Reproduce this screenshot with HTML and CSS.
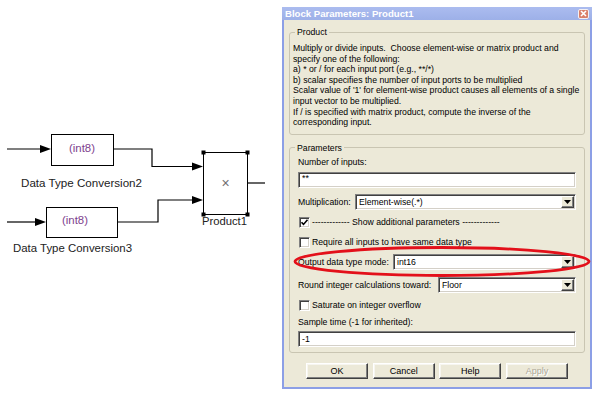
FILE: index.html
```html
<!DOCTYPE html>
<html>
<head>
<meta charset="utf-8">
<title>Block Parameters: Product1</title>
<link rel="stylesheet" href="styles.css">
</head>
<body>
<div class="page">
  <svg class="diagram" width="282" height="401" viewBox="0 0 282 401">
    <g fill="none" stroke="#000" stroke-width="1.2">
      <polyline points="7,149 42,149"/>
      <polyline points="113.5,149 152,149 152,166.5 193,166.5"/>
      <polyline points="7,222 37,222"/>
      <polyline points="117.5,222 158,222 158,200 193,200"/>
      <polyline points="248,183 265,183"/>
    </g>
    <g fill="#000">
      <polygon points="40,145 51,149 40,153"/>
      <polygon points="192,162.5 203,166.5 192,170.5"/>
      <polygon points="35,218 46,222 35,226"/>
      <polygon points="192,196 203,200 192,204"/>
    </g>
    <rect x="51.5" y="134.5" width="62" height="31" fill="#fff" stroke="#000"/>
    <rect x="46.5" y="207.5" width="71" height="30" fill="#fff" stroke="#000"/>
    <rect x="203.5" y="152.5" width="44" height="62" fill="#fff" stroke="#000"/>
    <g fill="#000">
      <rect x="201.5" y="150.5" width="4" height="4"/>
      <rect x="245.5" y="150.5" width="4" height="4"/>
      <rect x="201.5" y="212.5" width="4" height="4"/>
      <rect x="245.5" y="212.5" width="4" height="4"/>
    </g>
    <text class="dtype" x="69" y="151.5" textLength="26" lengthAdjust="spacingAndGlyphs">(int8)</text>
    <text class="dtype" x="62" y="224" textLength="26" lengthAdjust="spacingAndGlyphs">(int8)</text>
    <text class="times" x="225.5" y="188" text-anchor="middle">×</text>
    <text class="blabel" x="21" y="187" textLength="121" lengthAdjust="spacingAndGlyphs">Data Type Conversion2</text>
    <text class="blabel" x="13" y="251.5" textLength="119" lengthAdjust="spacingAndGlyphs">Data Type Conversion3</text>
    <text class="blabel" x="202" y="225" textLength="45" lengthAdjust="spacingAndGlyphs">Product1</text>
  </svg>

  <div class="dialog">
    <div class="titlebar">
      <span class="title">Block Parameters: Product1</span>
      <span class="close">
        <svg width="7" height="7" viewBox="0 0 7 7"><path d="M1 1L6 6M6 1L1 6" stroke="#fff" stroke-width="1.6" fill="none"/></svg>
      </span>
    </div>
    <div class="content">
      <fieldset class="group product">
        <legend>Product</legend>
        <div class="desc">Multiply or divide inputs.&nbsp; Choose element-wise or matrix product and<br>specify one of the following:<br>a) * or / for each input port (e.g., **/*)<br>b) scalar specifies the number of input ports to be multiplied<br>Scalar value of '1' for element-wise product causes all elements of a single<br>input vector to be multiplied.<br>If / is specified with matrix product, compute the inverse of the<br>corresponding input.</div>
      </fieldset>

      <fieldset class="group params">
        <legend>Parameters</legend>
        <div class="rows">
          <div class="lab">Number of inputs:</div>
          <div class="field f1"><span class="stars">**</span></div>
          <div class="row r-mult">
            <span>Multiplication:</span>
            <div class="select w-mult"><span class="val">Element-wise(.*)</span><span class="drop"><svg width="7" height="4" viewBox="0 0 7 4"><path d="M0 0H7L3.5 4Z" fill="#000"/></svg></span></div>
          </div>
          <div class="row cbrow r-cb1">
            <span class="cb"><svg width="9" height="9" viewBox="0 0 9 9"><path d="M1.5 4.2L3.5 6.4L7.5 1.8" stroke="#000" stroke-width="1.6" fill="none"/></svg></span>
            <span>------------- Show additional parameters -------------</span>
          </div>
          <div class="row cbrow r-cb2">
            <span class="cb"></span>
            <span>Require all inputs to have same data type</span>
          </div>
          <div class="row r-out">
            <span>Output data type mode:</span>
            <div class="select w-out"><span class="val">int16</span><span class="drop"><svg width="7" height="4" viewBox="0 0 7 4"><path d="M0 0H7L3.5 4Z" fill="#000"/></svg></span></div>
          </div>
          <div class="row r-round">
            <span>Round integer calculations toward:</span>
            <div class="select w-round"><span class="val">Floor</span><span class="drop"><svg width="7" height="4" viewBox="0 0 7 4"><path d="M0 0H7L3.5 4Z" fill="#000"/></svg></span></div>
          </div>
          <div class="row cbrow r-cb3">
            <span class="cb"></span>
            <span>Saturate on integer overflow</span>
          </div>
          <div class="lab r-sample">Sample time (-1 for inherited):</div>
          <div class="field f2">-1</div>
        </div>
      </fieldset>

      <div class="buttons">
        <span class="btn">OK</span>
        <span class="btn">Cancel</span>
        <span class="btn">Help</span>
        <span class="btn disabled">Apply</span>
      </div>
    </div>
  </div>

  <svg class="markup" width="603" height="401" viewBox="0 0 603 401">
    <ellipse cx="442" cy="261.5" rx="147" ry="14" fill="none" stroke="#e3101a" stroke-width="2.8"/>
  </svg>
</div>
</body>
</html>
```

FILE: styles.css
```css
* { box-sizing: border-box; }
html, body { margin: 0; padding: 0; background: #fff; }
body {
  width: 603px;
  height: 401px;
  overflow: hidden;
  font-family: "Liberation Sans", Arial, sans-serif;
  color: #000;
}
.page {
  position: relative;
  display: flex;
  align-items: flex-start;
  width: 603px;
  height: 401px;
}

/* diagram */
.diagram { flex: none; display: block; }
.diagram text { font-family: "Liberation Sans", Arial, sans-serif; }
.dtype { font-size: 10px; fill: #7e3f8e; }
.times { font-size: 14px; fill: #707070; }
.blabel { font-size: 11px; fill: #222; }

/* dialog window */
.dialog {
  flex: none;
  margin-top: 7px;
  width: 310px;
  height: 382px;
  display: flex;
  flex-direction: column;
  border: 2px solid #8c9fe6;
  border-top: 0;
  background: #ece9d8;
}
.titlebar {
  flex: none;
  height: 13px;
  margin: 0 -2px;
  padding: 0 3px 0 3px;
  display: flex;
  align-items: center;
  justify-content: space-between;
  background: linear-gradient(#abbcef, #9db0e8);
}
.title {
  font-size: 9.6px;
  font-weight: bold;
  color: #fff;
  line-height: 12px;
}
.close {
  width: 11px;
  height: 10px;
  border: 1px solid #f3f0f4;
  border-radius: 2px;
  background: #d9806a;
  display: flex;
  align-items: center;
  justify-content: center;
}
.close svg { display: block; }

.content {
  flex: 1;
  padding: 7px 5px 0 5px;
}

.group {
  margin: 0;
  min-width: 0;
  border: 1px solid #c9c5b2;
  border-radius: 3px;
}
.group legend {
  font-size: 8.7px;
  line-height: 10px;
  padding: 0 2px;
  color: #000;
}
.product { padding: 6px 4px 6px 3px; }
.product legend { margin-left: 2px; }
.desc {
  font-size: 8.7px;
  line-height: 10.6px;
  white-space: nowrap;
}

.params { margin-top: 8px; padding: 4px 8px 5px 8px; }
.params legend { margin-left: -3px; }
.rows { display: flex; flex-direction: column; font-size: 8.7px; }
.lab { height: 10px; line-height: 10px; }

.field, .select, .cb {
  background: #fff;
  border: 1px solid;
  border-color: #808080 #fff #fff #808080;
  box-shadow: inset 1px 1px 0 #404040, inset -1px -1px 0 #d4d0c8;
}
.field {
  height: 16px;
  line-height: 14px;
  padding-left: 3px;
  font-size: 8.7px;
}
.f1 { margin-top: 5px; }
.f2 { margin-top: 4px; }
.stars { display: inline-block; line-height: 10px; vertical-align: top; }

.row { display: flex; align-items: center; }
.r-mult { margin-top: 6px; height: 16px; }
.r-cb1 { margin-top: 6px; height: 13px; }
.r-cb2 { margin-top: 7px; height: 13px; }
.r-out { margin-top: 5px; height: 16px; }
.r-round { margin-top: 7px; height: 16px; }
.r-cb3 { margin-top: 6px; height: 13px; }
.r-sample { margin-top: 5px; }

.select {
  margin-left: auto;
  height: 16px;
  display: flex;
  align-items: center;
  padding: 0 1px 0 3px;
}
.w-mult { width: 221px; }
.w-out { width: 183px; }
.w-round { width: 138px; }
.select .val { flex: 1; }
.drop {
  width: 13px;
  height: 12px;
  background: #ece9d8;
  border: 1px solid;
  border-color: #fff #404040 #404040 #fff;
  box-shadow: inset -1px -1px 0 #808080;
  display: flex;
  align-items: center;
  justify-content: center;
}
.drop svg { display: block; }

.cbrow .cb {
  width: 11px;
  height: 11px;
  margin-left: 1px;
  margin-right: 2px;
  display: flex;
  align-items: center;
  justify-content: center;
}
.cb svg { display: block; }

.buttons {
  margin-top: 10px;
  display: flex;
  justify-content: center;
  gap: 4.7px;
}
.btn {
  width: 62px;
  height: 16px;
  font-size: 9px;
  background: #ece9d8;
  border: 1px solid;
  border-color: #fff #404040 #404040 #fff;
  box-shadow: inset -1px -1px 0 #808080, inset 1px 1px 0 #f7f6f0;
  display: flex;
  align-items: center;
  justify-content: center;
}
.btn.disabled { color: #aca899; text-shadow: 1px 1px 0 #fff; }

.markup {
  position: absolute;
  left: 0;
  top: 0;
  pointer-events: none;
}
```
